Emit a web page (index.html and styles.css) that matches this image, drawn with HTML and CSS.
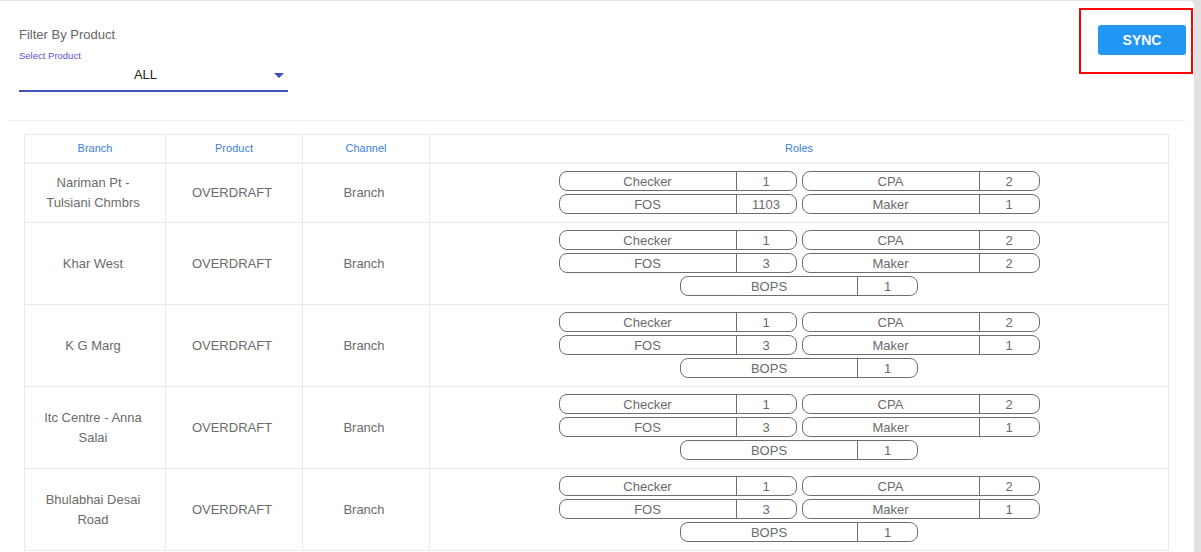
FILE: index.html
```html
<!DOCTYPE html>
<html>
<head>
<meta charset="utf-8">
<link rel="stylesheet" href="styles.css">
</head>
<body>
<div class="card">
  <div class="top">
    <div class="filter">
      <div class="filter-title">Filter By Product</div>
      <div class="select-label">Select Product</div>
      <div class="select">
        <span class="select-value">ALL</span>
        <span class="caret"></span>
      </div>
    </div>
    <div class="sync-box">
      <button class="sync">SYNC</button>
    </div>
  </div>
  <div class="divider"></div>
  <div class="table-wrap">
    <table class="grid">
      <thead>
        <tr>
          <th class="c-branch">Branch</th>
          <th class="c-product">Product</th>
          <th class="c-channel">Channel</th>
          <th class="c-roles">Roles</th>
        </tr>
      </thead>
      <tbody>
        <tr>
          <td>Nariman Pt - Tulsiani Chmbrs</td>
          <td>OVERDRAFT</td>
          <td>Branch</td>
          <td class="roles">
            <div class="pills">
              <div class="pill"><span class="lbl">Checker</span><span class="val">1</span></div>
              <div class="pill"><span class="lbl">CPA</span><span class="val">2</span></div>
              <div class="pill"><span class="lbl">FOS</span><span class="val">1103</span></div>
              <div class="pill"><span class="lbl">Maker</span><span class="val">1</span></div>
            </div>
          </td>
        </tr>
        <tr>
          <td>Khar West</td>
          <td>OVERDRAFT</td>
          <td>Branch</td>
          <td class="roles">
            <div class="pills">
              <div class="pill"><span class="lbl">Checker</span><span class="val">1</span></div>
              <div class="pill"><span class="lbl">CPA</span><span class="val">2</span></div>
              <div class="pill"><span class="lbl">FOS</span><span class="val">3</span></div>
              <div class="pill"><span class="lbl">Maker</span><span class="val">2</span></div>
              <div class="pill"><span class="lbl">BOPS</span><span class="val">1</span></div>
            </div>
          </td>
        </tr>
        <tr>
          <td>K G Marg</td>
          <td>OVERDRAFT</td>
          <td>Branch</td>
          <td class="roles">
            <div class="pills">
              <div class="pill"><span class="lbl">Checker</span><span class="val">1</span></div>
              <div class="pill"><span class="lbl">CPA</span><span class="val">2</span></div>
              <div class="pill"><span class="lbl">FOS</span><span class="val">3</span></div>
              <div class="pill"><span class="lbl">Maker</span><span class="val">1</span></div>
              <div class="pill"><span class="lbl">BOPS</span><span class="val">1</span></div>
            </div>
          </td>
        </tr>
        <tr>
          <td>Itc Centre - Anna Salai</td>
          <td>OVERDRAFT</td>
          <td>Branch</td>
          <td class="roles">
            <div class="pills">
              <div class="pill"><span class="lbl">Checker</span><span class="val">1</span></div>
              <div class="pill"><span class="lbl">CPA</span><span class="val">2</span></div>
              <div class="pill"><span class="lbl">FOS</span><span class="val">3</span></div>
              <div class="pill"><span class="lbl">Maker</span><span class="val">1</span></div>
              <div class="pill"><span class="lbl">BOPS</span><span class="val">1</span></div>
            </div>
          </td>
        </tr>
        <tr>
          <td>Bhulabhai Desai Road</td>
          <td>OVERDRAFT</td>
          <td>Branch</td>
          <td class="roles">
            <div class="pills">
              <div class="pill"><span class="lbl">Checker</span><span class="val">1</span></div>
              <div class="pill"><span class="lbl">CPA</span><span class="val">2</span></div>
              <div class="pill"><span class="lbl">FOS</span><span class="val">3</span></div>
              <div class="pill"><span class="lbl">Maker</span><span class="val">1</span></div>
              <div class="pill"><span class="lbl">BOPS</span><span class="val">1</span></div>
            </div>
          </td>
        </tr>
      </tbody>
    </table>
  </div>
</div>
</body>
</html>
```

FILE: styles.css
```css
html, body {
  margin: 0;
  padding: 0;
  height: 552px;
  overflow: hidden;
}
body {
  background: linear-gradient(to right, #ececec, #e2e2e2);
  font-family: "Liberation Sans", Arial, Helvetica, sans-serif;
}
.card {
  width: 1194px;
  background: #fff;
  border-top: 1px solid #e6e6e6;
  border-radius: 0 5px 0 0;
  min-height: 600px;
}
.top {
  display: flex;
  justify-content: space-between;
  align-items: flex-start;
  padding: 7px 1px 0 19px;
  height: 112px;
  box-sizing: border-box;
}
.filter {
  width: 269px;
  margin-top: 19px;
}
.filter-title {
  font-size: 13px;
  line-height: 15px;
  color: #666;
}
.select-label {
  margin-top: 8px;
  font-size: 9.5px;
  line-height: 12px;
  color: #5b4fd6;
}
.select {
  position: relative;
  padding: 3px 16px 7px 0;
  border-bottom: 2px solid #3f51b5;
  text-align: center;
}
.select-value {
  font-size: 13px;
  line-height: 17px;
  color: #222;
}
.caret {
  position: absolute;
  right: 4px;
  top: 11px;
  width: 0;
  height: 0;
  border-left: 5px solid transparent;
  border-right: 5px solid transparent;
  border-top: 5px solid #3f51b5;
}
.sync-box {
  border: 2px solid #ff0000;
  padding: 15px 5px 17px 17px;
}
.sync {
  display: block;
  width: 88px;
  height: 30px;
  border: none;
  border-radius: 3px;
  background: #2196f3;
  color: #fff;
  font-family: "Liberation Sans", Arial, sans-serif;
  font-weight: bold;
  font-size: 14px;
  padding: 0;
  cursor: pointer;
}
.divider {
  height: 1px;
  background: #eeeeee;
  margin: 7px 8px 0 9px;
}
.table-wrap {
  padding: 13px 25px 0 24px;
}
.grid {
  width: 1145px;
  border-collapse: collapse;
  table-layout: fixed;
}
.grid th, .grid td {
  border: 1px solid #e9e9e9;
  text-align: center;
}
.grid th {
  font-weight: normal;
  font-size: 11px;
  color: #3d7fd8;
  height: 26px;
  padding: 0 0 1px;
  border-bottom: 2px solid #eeeeee;
}
.c-branch { width: 140px; }
.c-product { width: 136px; }
.c-channel { width: 126px; }
.c-roles { width: auto; }
.grid td {
  font-size: 13px;
  line-height: 20px;
  color: #6b6b6b;
  padding: 0 17px 0 13px;
  vertical-align: middle;
}
.grid td.roles {
  padding: 7px 0 8px;
}
.pills {
  width: 481px;
  margin: 0 auto;
  display: flex;
  flex-wrap: wrap;
  justify-content: center;
  gap: 3px 5px;
}
.pill {
  width: 238px;
  height: 20px;
  box-sizing: border-box;
  border: 1px solid #6e6e6e;
  border-radius: 8px;
  display: flex;
  font-size: 13px;
  line-height: 20px;
  color: #6b6b6b;
}
.lbl {
  flex: 1;
  text-align: center;
}
.val {
  width: 59px;
  border-left: 1px solid #6e6e6e;
  text-align: center;
}
```
